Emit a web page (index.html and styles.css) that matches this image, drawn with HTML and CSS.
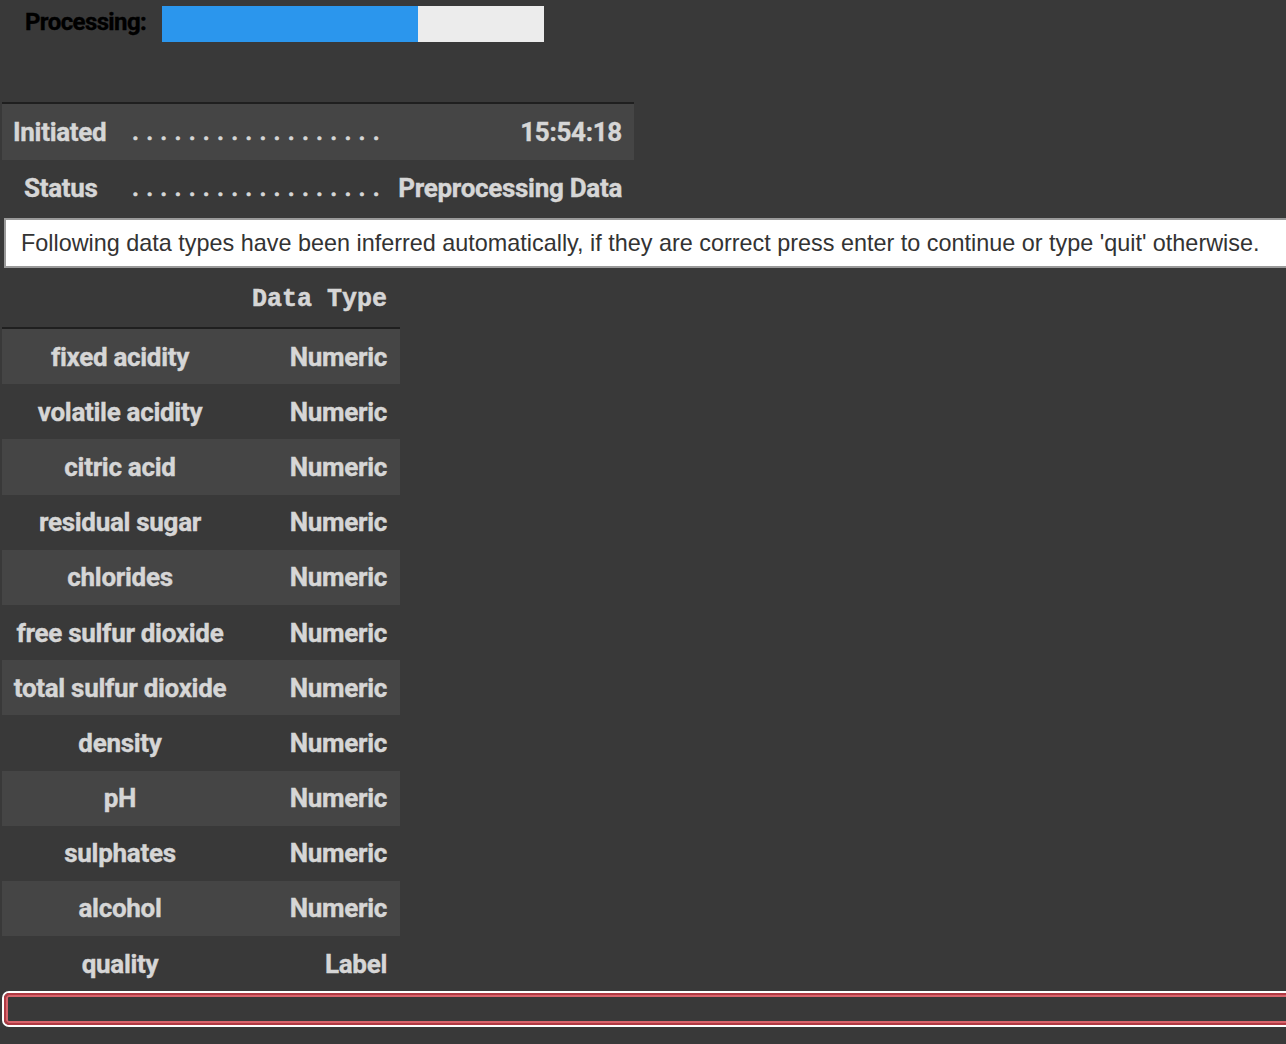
FILE: index.html
```
<!DOCTYPE html>
<html>
<head>
<meta charset="utf-8">
<link rel="stylesheet" href="styles.css">
</head>
<body>
<div class="progress">
  <span class="progress-label">Processing:</span>
  <div class="bar"><div class="fill" style="width:67%"></div></div>
</div>
<table class="status">
  <tr class="odd"><td class="k k1">Initiated</td><td class="dots">..................</td><td class="v">15:54:18</td></tr>
  <tr><td class="k k2">Status</td><td class="dots">..................</td><td class="v">Preprocessing Data</td></tr>
</table>
<div class="msg">Following data types have been inferred automatically, if they are correct press enter to continue or type 'quit' otherwise.</div>
<table class="types">
  <thead><tr><th></th><th class="h">Data Type</th></tr></thead>
  <tbody>
    <tr class="odd"><td>fixed acidity</td><td class="t">Numeric</td></tr>
    <tr><td>volatile acidity</td><td class="t">Numeric</td></tr>
    <tr class="odd"><td>citric acid</td><td class="t">Numeric</td></tr>
    <tr><td>residual sugar</td><td class="t">Numeric</td></tr>
    <tr class="odd"><td>chlorides</td><td class="t">Numeric</td></tr>
    <tr><td>free sulfur dioxide</td><td class="t">Numeric</td></tr>
    <tr class="odd"><td>total sulfur dioxide</td><td class="t">Numeric</td></tr>
    <tr><td>density</td><td class="t">Numeric</td></tr>
    <tr class="odd"><td>pH</td><td class="t">Numeric</td></tr>
    <tr><td>sulphates</td><td class="t">Numeric</td></tr>
    <tr class="odd"><td>alcohol</td><td class="t">Numeric</td></tr>
    <tr><td>quality</td><td class="t">Label</td></tr>
  </tbody>
</table>
<div class="input-wrap"><input class="input" type="text"></div>
</body>
</html>
```
FILE: styles.css
```
html, body {
  margin: 0;
  padding: 0;
  background: #393939;
  overflow: hidden;
}
body {
  width: 1286px;
  height: 1044px;
  font-family: Roboto, "Liberation Sans", sans-serif;
}
.progress {
  display: flex;
  align-items: center;
  height: 36px;
  margin-top: 6px;
  padding-left: 25px;
}
.progress-label {
  font-weight: 700;
  font-size: 24px;
  color: #000;
  width: 137px;
  letter-spacing: -0.6px;
  -webkit-text-stroke: 0.4px #000;
  margin-top: -4px;
}
.bar {
  width: 382px;
  height: 36px;
  background: #ececec;
}
.fill {
  height: 100%;
  background: #2b96ed;
}
.status {
  margin: 60px 0 0 2px;
  border-collapse: collapse;
  border-top: 2px solid #1f1f1f;
  width: 632px;
  color: #d6d6d6;
  font-weight: 700;
  font-size: 26px;
  letter-spacing: -0.3px;
  -webkit-text-stroke: 0.4px #d6d6d6;
}
.status td {
  height: 56px;
  padding: 0;
  white-space: nowrap;
}
.status tr.odd {
  background: #454545;
}
.status .k1 {
  padding-left: 11px;
  width: 119px;
}
.status .k2 {
  padding-left: 22px;
  width: 108px;
}
.status .dots {
  font-size: 24px;
  letter-spacing: 7.2px;
  width: 260px;
}
.status .v {
  text-align: right;
  padding-right: 12px;
}
.msg {
  margin: 2px 0 0 4px;
  height: 50px;
  box-sizing: border-box;
  width: 1300px;
  border: 2px solid #9a9a9a;
  background: #fff;
  color: #333;
  font-family: "Liberation Sans", Arial, sans-serif;
  font-size: 23.4px;
  padding-left: 15px;
  display: flex;
  align-items: center;
  white-space: nowrap;
}
.types {
  margin-left: 2px;
  border-collapse: collapse;
  width: 398px;
  color: #d6d6d6;
  font-weight: 700;
  font-size: 26px;
  letter-spacing: -0.3px;
  -webkit-text-stroke: 0.4px #d6d6d6;
}
.types thead tr {
  height: 60px;
  border-bottom: 2px solid #1f1f1f;
}
.types th.h {
  font-family: "Liberation Mono", "Courier New", monospace;
  font-size: 25px;
  font-weight: 700;
  text-align: right;
  padding-right: 13px;
  letter-spacing: 0;
  padding-top: 4px;
  padding-bottom: 0;
  -webkit-text-stroke: 0.5px #d6d6d6;
}
.types td {
  height: 55.2px;
  padding: 0;
  text-align: center;
  width: 236px;
  white-space: nowrap;
}
.types td.t {
  text-align: right;
  padding-right: 13px;
  width: auto;
}
.types tr.odd {
  background: #454545;
}
.input-wrap {
  margin: 0 0 0 2px;
  width: 1300px;
  height: 36px;
  box-sizing: border-box;
  border: 2px solid #fff;
  border-radius: 7px;
  padding: 0;
  background: #393939;
}
.input {
  display: block;
  box-sizing: border-box;
  width: 100%;
  height: 100%;
  margin: 0;
  background: #393939;
  border: 2px solid #b03a43;
  outline: none;
  border-radius: 5px;
  box-shadow: inset 0 0 0 2px #d8646c;
}
```
